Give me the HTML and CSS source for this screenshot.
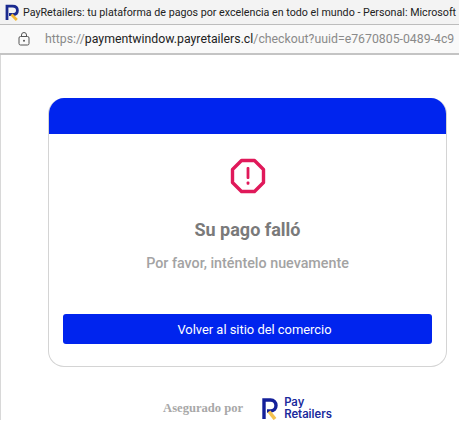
FILE: index.html
```html
<!DOCTYPE html>
<html lang="es">

<head>
    <meta charset="UTF-8">
    <meta name="viewport" content="width=device-width, initial-scale=1.0">
    <title>PayRetailers</title>
    <link rel="stylesheet" href="styles.css">
</head>

<body>
    <div class="titlebar">
        <svg class="favicon" width="14" height="17" viewBox="0 0 14 17">
            <path d="M2 16V2.2H7.5C10.6 2.2 12.4 4 12.4 6.4C12.4 8.8 10.6 10.5 7.5 10.5H4" fill="none" stroke="#1a2a8f" stroke-width="2.8"/>
            <path d="M6.5 10.5L11.8 16" fill="none" stroke="#f2b632" stroke-width="2.8"/>
        </svg>
        <span class="window-title">PayRetailers: tu plataforma de pagos por excelencia en todo el mundo - Personal: Microsoft</span>
    </div>
    <div class="addressbar">
        <svg class="lock" width="12" height="14" viewBox="0 0 12 14">
            <rect x="1" y="4.5" width="10" height="8.5" rx="1.5" fill="none" stroke="#555"/>
            <path d="M3.5 4.5V3A2.5 2.5 0 0 1 8.5 3V4.5" fill="none" stroke="#555"/>
            <circle cx="6" cy="8.7" r="1" fill="#555"/>
        </svg>
        <span class="url"><span class="url-dim">https://</span>paymentwindow.payretailers.cl<span class="url-dim">/checkout?uuid=e7670805-0489-4c9</span></span>
    </div>

    <div class="page">
        <div class="content">
            <div class="card">
                <div class="card-head"></div>
                <div class="card-body">
                    <svg class="alert-icon" width="36" height="36" viewBox="0 0 36 36">
                        <polygon points="11.5,2.5 24.5,2.5 33.5,11.5 33.5,24.5 24.5,33.5 11.5,33.5 2.5,24.5 2.5,11.5" fill="none" stroke="#e0195a" stroke-width="3.4" stroke-linejoin="round"/>
                        <rect x="16.6" y="9" width="2.8" height="12" rx="1" fill="#e0195a"/>
                        <rect x="16.6" y="23.5" width="2.8" height="3.2" rx="1" fill="#e0195a"/>
                    </svg>
                    <h1>Su pago falló</h1>
                    <p>Por favor, inténtelo nuevamente</p>
                    <button class="back-btn">Volver al sitio del comercio</button>
                </div>
            </div>

            <div class="secured">
                <span class="secured-text">Asegurado por</span>
                <svg class="brand-mark" width="16" height="22" viewBox="0 0 16 22">
                    <path d="M2 21V2H8.5C12 2 14 4.4 14 7.5C14 10.6 12 13 8.5 13H5" fill="none" stroke="#14209a" stroke-width="3.4"/>
                    <path d="M7 13.5L13 21" fill="none" stroke="#f4c24f" stroke-width="3.6"/>
                </svg>
                <span class="brand-name">Pay<br>Retailers</span>
            </div>
        </div>
    </div>
</body>

</html>
```

FILE: styles.css
```css
body {
    margin: 0;
    height: 431px;
    overflow: hidden;
    background-color: #fff;
    font-family: "Roboto", "Liberation Sans", sans-serif;
}

.titlebar {
    display: flex;
    align-items: center;
    height: 24px;
    padding-left: 5px;
    background-color: #f3f3f3;
    border-bottom: 1px solid #bdbdbd;
    overflow: hidden;
    white-space: nowrap;
}

.favicon {
    flex-shrink: 0;
    margin-right: 4px;
}

.window-title {
    font-family: "Roboto", "Liberation Sans", sans-serif;
    font-size: 10.7px;
    color: #222;
}

.addressbar {
    display: flex;
    align-items: center;
    height: 28px;
    padding-left: 18px;
    background-color: #f9f9f9;
    border-bottom: 2px solid #c4c4c4;
    overflow: hidden;
    white-space: nowrap;
}

.lock {
    flex-shrink: 0;
    margin-right: 15px;
}

.url {
    font-family: "Roboto", "Liberation Sans", sans-serif;
    font-size: 12.3px;
    color: #222;
}

.url-dim {
    color: #8a8a8a;
}

.page {
    padding: 43px 0 0 47px;
    border-left: 1px solid #d8d8d8;
}

.content {
    display: flex;
    flex-direction: column;
    align-items: center;
    width: 399px;
}

.card {
    width: 100%;
    border: 1px solid #d4d4d4;
    border-top: none;
    border-radius: 16px;
    overflow: hidden;
    box-sizing: border-box;
}

.card-head {
    height: 36px;
    margin: 0 -1px;
    background-color: #0024ee;
}

.card-body {
    display: flex;
    flex-direction: column;
    align-items: center;
    padding: 24px 14px 22px;
}

.alert-icon {
    display: block;
}

h1 {
    margin: 25px 0 0;
    font-size: 18px;
    line-height: 22px;
    font-weight: 700;
    color: #7a7a7a;
}

p {
    margin: 13px 0 0;
    font-size: 14.3px;
    line-height: 18px;
    font-weight: 500;
    color: #a3a3a3;
}

.back-btn {
    width: 100%;
    height: 30px;
    margin-top: 42px;
    padding: 0 0 0 14px;
    background-color: #0024ee;
    color: #fff;
    border: none;
    border-radius: 3px;
    font-family: inherit;
    font-size: 12.9px;
    font-weight: 400;
}

.secured {
    display: flex;
    align-items: center;
    margin-top: 30px;
}

.secured-text {
    margin-right: 19px;
    font-family: "Liberation Serif", serif;
    font-size: 12.6px;
    font-weight: 700;
    color: #a8a8a8;
}

.brand-mark {
    margin-right: 6px;
}

.brand-name {
    font-family: "Inter", "Liberation Sans", sans-serif;
    font-size: 11.3px;
    line-height: 11.5px;
    font-weight: 600;
    color: #1a2a9c;
}
```
